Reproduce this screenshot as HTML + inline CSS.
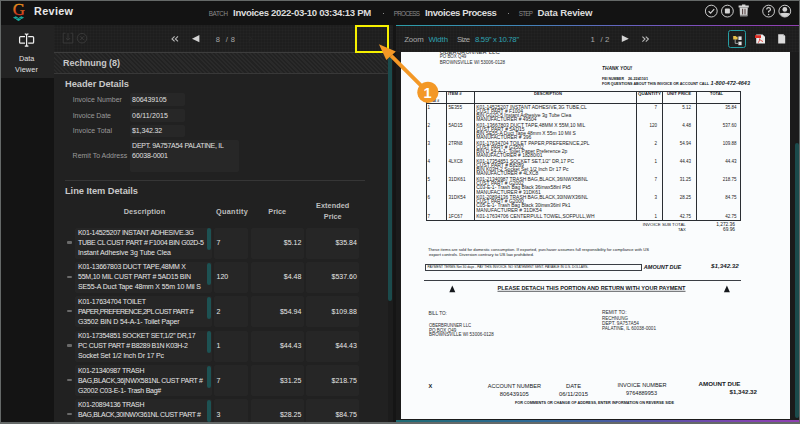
<!DOCTYPE html>
<html><head><meta charset="utf-8">
<style>
*{margin:0;padding:0;box-sizing:border-box}
html,body{width:800px;height:424px;overflow:hidden;background:#656968;font-family:"Liberation Sans",sans-serif}
.a{position:absolute}
.t{position:absolute;white-space:pre;line-height:1;font-family:"Liberation Sans",sans-serif}
.grid{background-color:#1e1e1e;background-image:linear-gradient(90deg,rgba(255,255,255,0.012) 1px,transparent 1px),linear-gradient(0deg,rgba(255,255,255,0.012) 1px,transparent 1px);background-size:3px 3px}
.box{position:absolute;background:#272727;border-radius:2px}
.cell{position:absolute;background:#262626;border-radius:2px}
.pill{position:absolute;width:4px;background:#1d5253;border-radius:2px}
.hdl{position:absolute;width:5px;height:2.4px;background:#6a6a6a;border-radius:1px}
.dl{position:absolute;background:#23272b}
</style></head><body>
<!-- main frame -->
<div class="a" style="left:1px;top:1px;width:798px;height:421px;background:#1c1c1c"></div>
<!-- header -->
<div class="a" style="left:1px;top:1px;width:798px;height:24px;background:#131313"></div>
<!-- sidebar -->
<div class="a" style="left:1px;top:25px;width:53px;height:53px;background:#232323"></div>
<div class="a" style="left:1px;top:78px;width:53px;height:344px;background:#141414"></div>
<!-- left panel -->
<div class="a grid" style="left:54px;top:25px;width:339px;height:28px"></div>
<div class="a" style="left:54px;top:52px;width:339px;height:1px;background:#3d3d3d"></div>
<div class="a" style="left:54px;top:53px;width:334px;height:20px;background:repeating-linear-gradient(45deg,#222222 0px,#222222 1.5px,#2a2a2a 1.5px,#2a2a2a 3px)"></div>
<div class="a" style="left:54px;top:73px;width:334px;height:1px;background:#383838"></div>
<div class="a" style="left:54px;top:74px;width:334px;height:348px;background:#212121"></div>
<div class="a" style="left:388px;top:53px;width:5px;height:369px;background:#1c1c1c"></div>
<div class="a" style="left:388px;top:57px;height:244px;width:4.3px;background:#1b4b4c;border-radius:2px"></div>
<div class="a" style="left:393px;top:25px;width:2.5px;height:397px;background:#151515"></div>
<!-- header detail boxes -->
<div class="box" style="left:129.8px;top:93.3px;width:55px;height:13.2px"></div>
<div class="box" style="left:129.8px;top:109px;width:55px;height:12.5px"></div>
<div class="box" style="left:129.8px;top:124.5px;width:55px;height:12.4px"></div>
<div class="box" style="left:129.6px;top:140.3px;width:109.7px;height:31.3px"></div>
<div class="a" style="left:65px;top:179.5px;width:300px;height:1px;background:#363636"></div>
<div class="cell" style="left:75px;top:227.60px;width:137px;height:31.2px"></div>
<div class="pill" style="left:207px;top:228.20px;height:22px"></div>
<div class="hdl" style="left:66.5px;top:241.20px"></div>
<div class="cell" style="left:213.7px;top:227.60px;width:34.5px;height:31.2px"></div>
<div class="cell" style="left:251px;top:227.60px;width:52.8px;height:31.2px"></div>
<div class="cell" style="left:306px;top:227.60px;width:53px;height:31.2px"></div>
<div class="cell" style="left:75px;top:261.95px;width:137px;height:31.2px"></div>
<div class="pill" style="left:207px;top:262.55px;height:22px"></div>
<div class="hdl" style="left:66.5px;top:275.55px"></div>
<div class="cell" style="left:213.7px;top:261.95px;width:34.5px;height:31.2px"></div>
<div class="cell" style="left:251px;top:261.95px;width:52.8px;height:31.2px"></div>
<div class="cell" style="left:306px;top:261.95px;width:53px;height:31.2px"></div>
<div class="cell" style="left:75px;top:296.30px;width:137px;height:31.2px"></div>
<div class="pill" style="left:207px;top:296.90px;height:22px"></div>
<div class="hdl" style="left:66.5px;top:309.90px"></div>
<div class="cell" style="left:213.7px;top:296.30px;width:34.5px;height:31.2px"></div>
<div class="cell" style="left:251px;top:296.30px;width:52.8px;height:31.2px"></div>
<div class="cell" style="left:306px;top:296.30px;width:53px;height:31.2px"></div>
<div class="cell" style="left:75px;top:330.65px;width:137px;height:31.2px"></div>
<div class="pill" style="left:207px;top:331.25px;height:22px"></div>
<div class="hdl" style="left:66.5px;top:344.25px"></div>
<div class="cell" style="left:213.7px;top:330.65px;width:34.5px;height:31.2px"></div>
<div class="cell" style="left:251px;top:330.65px;width:52.8px;height:31.2px"></div>
<div class="cell" style="left:306px;top:330.65px;width:53px;height:31.2px"></div>
<div class="cell" style="left:75px;top:365.00px;width:137px;height:31.2px"></div>
<div class="pill" style="left:207px;top:365.60px;height:22px"></div>
<div class="hdl" style="left:66.5px;top:378.60px"></div>
<div class="cell" style="left:213.7px;top:365.00px;width:34.5px;height:31.2px"></div>
<div class="cell" style="left:251px;top:365.00px;width:52.8px;height:31.2px"></div>
<div class="cell" style="left:306px;top:365.00px;width:53px;height:31.2px"></div>
<div class="cell" style="left:75px;top:399.35px;width:137px;height:31.2px"></div>
<div class="pill" style="left:207px;top:399.95px;height:22px"></div>
<div class="hdl" style="left:66.5px;top:412.95px"></div>
<div class="cell" style="left:213.7px;top:399.35px;width:34.5px;height:31.2px"></div>
<div class="cell" style="left:251px;top:399.35px;width:52.8px;height:31.2px"></div>
<div class="cell" style="left:306px;top:399.35px;width:53px;height:31.2px"></div>
<!-- right panel -->
<div class="a grid" style="left:395.5px;top:25px;width:403.5px;height:27px;background-color:#1d1d1d"></div>
<div class="a" style="left:395.5px;top:24.6px;width:403.5px;height:1.6px;background:linear-gradient(90deg,#2c9ea8 0%,#3f86b8 30%,#6a5fc0 60%,#8a44b8 85%,#9040b0 100%)"></div>
<div class="a" style="left:395.5px;top:52px;width:403.5px;height:370px;background:#1b1b1b"></div>
<div class="a" style="left:400.8px;top:52px;width:389px;height:366.5px;background:#fafcfd"></div>
<div class="a" style="left:795px;top:142.6px;width:4px;height:275.4px;background:#1b4b4c;border-radius:2px"></div>
<div class="a" style="left:395.5px;top:420.4px;width:403.5px;height:1.6px;background:linear-gradient(90deg,#1f6a72 0%,#2f6a98 35%,#5a52a8 65%,#8244b0 88%,#8e40b0 100%)"></div>
<div class="dl" style="left:425.8px;top:90.9px;width:314.7px;height:1.0px;background:#2a2e33"></div>
<div class="dl" style="left:425.8px;top:103.0px;width:314.7px;height:0.9px;background:#2a2e33"></div>
<div class="dl" style="left:425.8px;top:219.6px;width:314.7px;height:1.0px;background:#2a2e33"></div>
<div class="dl" style="left:425.8px;top:90.9px;width:1.0px;height:129.7px;background:#2a2e33"></div>
<div class="dl" style="left:445.9px;top:90.9px;width:1.0px;height:129.7px;background:#2a2e33"></div>
<div class="dl" style="left:473.9px;top:90.9px;width:1.0px;height:129.7px;background:#2a2e33"></div>
<div class="dl" style="left:636.4px;top:90.9px;width:1.0px;height:129.7px;background:#2a2e33"></div>
<div class="dl" style="left:662.4px;top:90.9px;width:1.0px;height:129.7px;background:#2a2e33"></div>
<div class="dl" style="left:695.9px;top:90.9px;width:1.0px;height:129.7px;background:#2a2e33"></div>
<div class="dl" style="left:739.7px;top:90.9px;width:1.0px;height:129.7px;background:#2a2e33"></div>
<div class="a" style="left:425px;top:264.3px;width:216.5px;height:7px;border:0.8px solid #3a3e44"></div>
<div class="dl" style="left:424px;top:279.8px;width:316.5px;height:1px;background:#3a3e44"></div>

<svg class="a" style="left:440px;top:280px" width="300" height="16" viewBox="440 280 300 16">
 <path d="M452.3 285.4 L455.3 292.2 L449.3 292.2Z" fill="#15181c"/>
 <path d="M726.9 285.4 L729.9 292.2 L723.9 292.2Z" fill="#15181c"/>
</svg>
<div class="a" style="left:383.2px;top:12.8px;width:1.3px;height:1.3px;background:#8a8a8a"></div>
<div class="a" style="left:508.2px;top:12.8px;width:1.3px;height:1.3px;background:#8a8a8a"></div>
<!--EXTRA-->
<!-- G logo -->
<svg class="a" style="left:8px;top:2px" width="22" height="22" viewBox="8 2 22 22">
 <defs><linearGradient id="gg" x1="0" y1="0" x2="0" y2="1"><stop offset="0.1" stop-color="#eca21e"/><stop offset="0.9" stop-color="#d2231f"/></linearGradient></defs>
 <text x="18.7" y="15.3" text-anchor="middle" font-family="Liberation Serif" font-size="16.8" fill="url(#gg)" stroke="url(#gg)" stroke-width="0.35">G</text>
 <path d="M12.9 17.7 L15.7 16.3 L18.4 17.7 L15.7 19.1Z M18.6 17.7 L21.4 16.3 L24.1 17.7 L21.4 19.1Z M15.8 19.4 L18.5 18.0 L21.2 19.4 L18.5 20.9Z" fill="#19a99c"/>
</svg>
<!-- header right icons -->
<svg class="a" style="left:700px;top:0px" width="99" height="24" viewBox="700 0 99 24">
 <g fill="none" stroke="#d4d4d4" stroke-width="0.95">
  <circle cx="711.3" cy="11.1" r="5.9"/>
  <path d="M708.6 11.3 L710.6 13.2 L714.2 9.2" stroke-width="1.2"/>
  <circle cx="727.4" cy="11.1" r="5.9"/>
  <circle cx="768.6" cy="11.1" r="5.9"/>
  <circle cx="784.8" cy="11.1" r="5.9"/>
  <path d="M766.7 9.6 Q766.7 7.6 768.6 7.6 Q770.5 7.6 770.5 9.4 Q770.5 10.6 768.6 11.4 V12.6" stroke-width="1.15"/>
 </g>
 <rect x="724.9" y="8.6" width="5" height="5" rx="0.8" fill="#d4d4d4"/>
 <circle cx="768.6" cy="14.6" r="0.75" fill="#d4d4d4"/>
 <!-- trash -->
 <path d="M738.6 5.6 H748.8 V7.4 H738.6Z M742 4.6 H745.4 V5.6 H742Z" fill="#d4d4d4"/>
 <path d="M739.6 7.6 H747.8 L747.4 16.2 H740Z" fill="#d4d4d4"/>
 <path d="M742.6 8.8 V14.4 M745 8.8 V14.4" stroke="#4a3434" stroke-width="0.95"/>
 <path d="M740 14.8 H747.4 V16.2 H740Z" fill="#8a8a8a"/>
 <circle cx="784.8" cy="9.4" r="2.4" fill="#d4d4d4"/>
 <path d="M779.9 13.3 Q784.8 12.2 789.7 13.3 Q788.4 16.6 784.8 16.9 Q781.2 16.6 779.9 13.3Z" fill="#d4d4d4"/>
</svg>
<!-- data viewer icon -->
<svg class="a" style="left:17px;top:32px" width="20" height="16" viewBox="0 0 20 16">
 <g fill="none" stroke="#eeeeee" stroke-width="1.25">
  <path d="M8 4.6 H3.6 Q2.6 4.6 2.6 5.6 V10.2 Q2.6 11.2 3.6 11.2 H8"/>
  <path d="M11.2 4.6 H15.6 Q16.6 4.6 16.6 5.6 V10.2 Q16.6 11.2 15.6 11.2 H11.2"/>
  <path d="M9.6 2.4 V13.6"/>
  <path d="M7.8 1.8 Q9.6 1.8 9.6 3 Q9.6 1.8 11.4 1.8"/>
  <path d="M7.8 14.2 Q9.6 14.2 9.6 13 Q9.6 14.2 11.4 14.2"/>
 </g>
</svg>
<!-- left toolbar dim icons -->
<svg class="a" style="left:62px;top:32px" width="28" height="13" viewBox="0 0 28 13">
 <g fill="none" stroke="#3b3b3b" stroke-width="0.9">
  <path d="M3.5 1.2 H1.2 V11 H10.8 V1.2 H8.5"/>
  <path d="M6 1 V8 M3.8 6 L6 8.2 L8.2 6"/>
  <circle cx="20" cy="6.2" r="4.8"/>
  <path d="M18 4.2 L22 8.2 M22 4.2 L18 8.2"/>
 </g>
</svg>
<!-- left nav -->
<svg class="a" style="left:168px;top:33px" width="90" height="12" viewBox="0 0 90 12">
 <path d="M6.6 3.4 L4 5.9 L6.6 8.4 M10 3.4 L7.4 5.9 L10 8.4" fill="none" stroke="#b8b8b8" stroke-width="1.1"/>
 <path d="M31.4 2 V9.3 L24 5.65Z" fill="#d4d4d4"/>
 <path d="M80.4 3.4 L84.2 5.8 L80.4 8.2" fill="none" stroke="#262626" stroke-width="1"/>
</svg>
<!-- right nav -->
<svg class="a" style="left:618px;top:33px" width="40" height="12" viewBox="0 0 40 12">
 <path d="M3.8 2.2 V9.1 L10.8 5.65Z" fill="#d4d4d4"/>
 <path d="M24.4 3.6 L27 6.1 L24.4 8.6 M27.8 3.6 L30.4 6.1 L27.8 8.6" fill="none" stroke="#b8b8b8" stroke-width="1.1"/>
 <path d="M-4 3.2 L-8 5.7" stroke="#2e2e2e"/>
</svg>
<!-- right toolbar buttons -->
<div class="a" style="left:728px;top:30.3px;width:18px;height:17.5px;border:1.2px solid #269ea4;border-radius:2.5px"></div>
<svg class="a" style="left:728px;top:30px" width="60" height="18" viewBox="0 0 60 18">
 <path d="M5.2 6 H7.6 L8.4 6.8 H9.6 V9.4 H5.2Z" fill="#e8c04a"/>
 <path d="M7.2 9.4 V13.4 H10" fill="none" stroke="#cfcfcf" stroke-width="0.7"/>
 <rect x="10.4" y="6.4" width="3.2" height="3.6" fill="#e4e4e4"/>
 <rect x="10.4" y="11.6" width="3.2" height="3.6" fill="#e4e4e4"/>
 <!-- pdf -->
 <path d="M28.2 4.4 H34.6 L37 6.8 V13.4 H28.2Z" fill="#eeeeee"/>
 <path d="M27 5.2 H33 V8 H27Z" fill="#dd2b22"/>
 <path d="M31.2 8.8 Q32.6 10.6 35 11.6 M31.8 8.6 Q31.6 11 30.2 12.8" fill="none" stroke="#dd2b22" stroke-width="0.8"/>
 <!-- doc -->
 <path d="M50.2 4.2 H55.4 L57.2 6 V13.4 H50.2Z" fill="#dcdcdc"/>
 <path d="M55.4 4.2 V6 H57.2" fill="#a8a8a8"/>
</svg>

<svg class="a" style="left:0;top:0" width="800" height="424" font-family="Liberation Sans" xml:space="preserve"><defs><clipPath id="pg"><rect x="400.8" y="52" width="389" height="366.5"/></clipPath></defs>
<line x1="497.5" y1="291.3" x2="685.5" y2="291.3" stroke="#15181c" stroke-width="0.7"/>
<text x="34.00" y="14.80" font-size="10.8" fill="#e8e8e8" font-weight="bold" textLength="39.00" lengthAdjust="spacing">Review</text>
<text x="208.80" y="15.60" font-size="6.3" fill="#8a8a8a" textLength="19.20" lengthAdjust="spacing">BATCH</text>
<text x="233.10" y="16.00" font-size="9.6" fill="#dcdcdc" font-weight="bold" textLength="138.10" lengthAdjust="spacing">Invoices 2022-03-10 03:34:13 PM</text>
<text x="393.80" y="15.60" font-size="6.3" fill="#8a8a8a" textLength="26.20" lengthAdjust="spacing">PROCESS</text>
<text x="425.00" y="16.00" font-size="9.6" fill="#dcdcdc" font-weight="bold" textLength="71.90" lengthAdjust="spacing">Invoices Process</text>
<text x="518.80" y="15.60" font-size="6.3" fill="#8a8a8a" textLength="14.20" lengthAdjust="spacing">STEP</text>
<text x="537.50" y="16.00" font-size="9.6" fill="#dcdcdc" font-weight="bold" textLength="55.00" lengthAdjust="spacing">Data Review</text>
<text x="18.90" y="61.00" font-size="7.3" fill="#e0e0e0" textLength="15.50" lengthAdjust="spacing">Data</text>
<text x="15.00" y="72.20" font-size="7.3" fill="#e0e0e0" textLength="22.90" lengthAdjust="spacing">Viewer</text>
<text x="215.80" y="41.80" font-size="7.5" fill="#a8a8a8">8</text>
<text x="225.80" y="41.80" font-size="7.5" fill="#a8a8a8" textLength="9.20" lengthAdjust="spacing">/8</text>
<text x="63.00" y="66.00" font-size="9" fill="#c8c8c8" font-weight="bold" textLength="57.00" lengthAdjust="spacing">Rechnung (8)</text>
<text x="65.00" y="87.00" font-size="9.3" fill="#c8c8c8" font-weight="bold" textLength="64.00" lengthAdjust="spacing">Header Details</text>
<text x="72.70" y="102.10" font-size="7" fill="#9a9a9a" textLength="49.20" lengthAdjust="spacing">Invoice Number</text>
<text x="72.70" y="117.90" font-size="7" fill="#9a9a9a" textLength="38.30" lengthAdjust="spacing">Invoice Date</text>
<text x="72.70" y="133.20" font-size="7" fill="#9a9a9a" textLength="39.40" lengthAdjust="spacing">Invoice Total</text>
<text x="72.60" y="157.80" font-size="7" fill="#9a9a9a" textLength="54.60" lengthAdjust="spacing">Remit To Address</text>
<text x="132.10" y="102.10" font-size="7" fill="#e0e0e0" textLength="34.60" lengthAdjust="spacing">806439105</text>
<text x="132.10" y="117.70" font-size="7" fill="#e0e0e0" textLength="35.80" lengthAdjust="spacing">06/11/2015</text>
<text x="132.10" y="132.70" font-size="7" fill="#e0e0e0" textLength="30.00" lengthAdjust="spacing">$1,342.32</text>
<text x="132.10" y="148.40" font-size="7" fill="#e0e0e0" textLength="91.80" lengthAdjust="spacing">DEPT. 9A757A54 PALATINE, IL</text>
<text x="132.10" y="157.80" font-size="7" fill="#e0e0e0" textLength="35.90" lengthAdjust="spacing">60038-0001</text>
<text x="65.00" y="194.20" font-size="9.3" fill="#c8c8c8" font-weight="bold" textLength="73.00" lengthAdjust="spacing">Line Item Details</text>
<text x="123.70" y="214.00" font-size="7.3" fill="#bdbdbd" font-weight="bold" textLength="41.40" lengthAdjust="spacing">Description</text>
<text x="215.90" y="214.00" font-size="7.3" fill="#bdbdbd" font-weight="bold" textLength="32.00" lengthAdjust="spacing">Quantity</text>
<text x="268.30" y="213.70" font-size="7.3" fill="#bdbdbd" font-weight="bold" textLength="17.70" lengthAdjust="spacing">Price</text>
<text x="316.00" y="208.00" font-size="7.3" fill="#bdbdbd" font-weight="bold" textLength="33.30" lengthAdjust="spacing">Extended</text>
<text x="323.80" y="218.80" font-size="7.3" fill="#bdbdbd" font-weight="bold" textLength="17.70" lengthAdjust="spacing">Price</text>
<text x="78.00" y="235.10" font-size="7" fill="#e6e6e6" textLength="116.00" lengthAdjust="spacing">K01-14525207 INSTANT ADHESIVE.3G</text>
<text x="78.00" y="245.10" font-size="7" fill="#e6e6e6" textLength="126.00" lengthAdjust="spacing">TUBE CL CUST PART # F1004 BIN G02D-5</text>
<text x="78.00" y="255.10" font-size="7" fill="#e6e6e6" textLength="93.00" lengthAdjust="spacing">Instant Adhesive 3g Tube Clea</text>
<text x="216.50" y="245.10" font-size="7" fill="#e6e6e6">7</text>
<text x="301.30" y="245.10" font-size="7" fill="#e6e6e6" text-anchor="end">$5.12</text>
<text x="356.80" y="245.10" font-size="7" fill="#e6e6e6" text-anchor="end">$35.84</text>
<text x="78.00" y="269.45" font-size="7" fill="#e6e6e6" textLength="108.00" lengthAdjust="spacing">K01-13667803 DUCT TAPE,48MM X</text>
<text x="78.00" y="279.45" font-size="7" fill="#e6e6e6" textLength="113.00" lengthAdjust="spacing">55M,10 MIL CUST PART # 5AD15 BIN</text>
<text x="78.00" y="289.45" font-size="7" fill="#e6e6e6" textLength="123.00" lengthAdjust="spacing">SE55-A Duct Tape 48mm X 55m 10 Mil S</text>
<text x="216.50" y="279.45" font-size="7" fill="#e6e6e6">120</text>
<text x="301.30" y="279.45" font-size="7" fill="#e6e6e6" text-anchor="end">$4.48</text>
<text x="356.80" y="279.45" font-size="7" fill="#e6e6e6" text-anchor="end">$537.60</text>
<text x="78.00" y="303.80" font-size="7" fill="#e6e6e6" textLength="68.00" lengthAdjust="spacing">K01-17634704 TOILET</text>
<text x="78.00" y="313.80" font-size="7" fill="#e6e6e6" textLength="115.60" lengthAdjust="spacing">PAPER,PREFERENCE,2PL CUST PART #</text>
<text x="78.00" y="323.80" font-size="7" fill="#e6e6e6" textLength="101.60" lengthAdjust="spacing">G3502 BIN D 54-A-1- Toilet Paper</text>
<text x="216.50" y="313.80" font-size="7" fill="#e6e6e6">2</text>
<text x="301.30" y="313.80" font-size="7" fill="#e6e6e6" text-anchor="end">$54.94</text>
<text x="356.80" y="313.80" font-size="7" fill="#e6e6e6" text-anchor="end">$109.88</text>
<text x="78.00" y="338.15" font-size="7" fill="#e6e6e6" textLength="117.60" lengthAdjust="spacing">K01-17354851 SOCKET SET,1/2” DR,17</text>
<text x="78.00" y="348.15" font-size="7" fill="#e6e6e6" textLength="110.00" lengthAdjust="spacing">PC CUST PART # B8289 B1N K03H-2</text>
<text x="78.00" y="358.15" font-size="7" fill="#e6e6e6" textLength="86.00" lengthAdjust="spacing">Socket Set 1/2 Inch Dr 17 Pc</text>
<text x="216.50" y="348.15" font-size="7" fill="#e6e6e6">1</text>
<text x="301.30" y="348.15" font-size="7" fill="#e6e6e6" text-anchor="end">$44.43</text>
<text x="356.80" y="348.15" font-size="7" fill="#e6e6e6" text-anchor="end">$44.43</text>
<text x="78.00" y="372.50" font-size="7" fill="#e6e6e6" textLength="66.50" lengthAdjust="spacing">K01-21340987 TRASH</text>
<text x="78.00" y="382.50" font-size="7" fill="#e6e6e6" textLength="125.00" lengthAdjust="spacing">BAG,BLACK,36|NWX581NL CUST PART #</text>
<text x="78.00" y="392.50" font-size="7" fill="#e6e6e6" textLength="83.25" lengthAdjust="spacing">G2002 C03-E-1- Trash Bag#</text>
<text x="216.50" y="382.50" font-size="7" fill="#e6e6e6">7</text>
<text x="301.30" y="382.50" font-size="7" fill="#e6e6e6" text-anchor="end">$31.25</text>
<text x="356.80" y="382.50" font-size="7" fill="#e6e6e6" text-anchor="end">$218.75</text>
<text x="78.00" y="406.85" font-size="7" fill="#e6e6e6" textLength="66.50" lengthAdjust="spacing">K01-20894136 TRASH</text>
<text x="78.00" y="416.85" font-size="7" fill="#e6e6e6" textLength="123.00" lengthAdjust="spacing">BAG,BLACK,30INWX361NL CUST PART #</text>
<text x="78.00" y="426.85" font-size="7" fill="#e6e6e6" textLength="83.25" lengthAdjust="spacing">G2002 C03-E-1- Trash Bag#</text>
<text x="216.50" y="416.85" font-size="7" fill="#e6e6e6">3</text>
<text x="301.30" y="416.85" font-size="7" fill="#e6e6e6" text-anchor="end">$28.25</text>
<text x="356.80" y="416.85" font-size="7" fill="#e6e6e6" text-anchor="end">$84.75</text>
<text x="404.20" y="41.50" font-size="7.8" fill="#a8a8a8" textLength="19.50" lengthAdjust="spacing">Zoom</text>
<text x="428.50" y="41.50" font-size="7.8" fill="#2fa3b3" textLength="19.50" lengthAdjust="spacing">Width</text>
<text x="457.00" y="41.50" font-size="7.8" fill="#a8a8a8" textLength="13.00" lengthAdjust="spacing">Size</text>
<text x="475.00" y="41.50" font-size="7.8" fill="#2fa3b3" textLength="44.00" lengthAdjust="spacing">8.59” x 10.78”</text>
<text x="590.60" y="41.50" font-size="7.8" fill="#a8a8a8">1</text>
<text x="600.60" y="41.50" font-size="7.8" fill="#a8a8a8" textLength="8.80" lengthAdjust="spacing">/2</text>
<text x="439.80" y="53.60" font-size="4.6" fill="#2a2d30" textLength="60.00" lengthAdjust="spacingAndGlyphs" style="clip-path:url(#pg);">OBERBRUNNER LLC</text>
<text x="439.80" y="57.80" font-size="4.6" fill="#2a2d30" textLength="26.50" lengthAdjust="spacingAndGlyphs" style="clip-path:url(#pg);">PO BOX Q49</text>
<text x="439.80" y="63.60" font-size="4.6" fill="#2a2d30" textLength="65.20" lengthAdjust="spacingAndGlyphs" style="clip-path:url(#pg);">BROWNSVILLE WI 53006-0128</text>
<text x="602.00" y="70.00" font-size="4.6" fill="#15181c" font-weight="bold" font-style="italic" textLength="30.00" lengthAdjust="spacingAndGlyphs" style="clip-path:url(#pg);">THANK YOU!</text>
<text x="602.00" y="79.60" font-size="3.3" fill="#15181c" font-weight="bold" textLength="22.00" lengthAdjust="spacingAndGlyphs" style="clip-path:url(#pg);">FEI NUMBER</text>
<text x="628.00" y="79.60" font-size="3.3" fill="#15181c" font-weight="bold" textLength="20.00" lengthAdjust="spacingAndGlyphs" style="clip-path:url(#pg);">26-2241101</text>
<text x="602.00" y="85.00" font-size="3.6" fill="#15181c" font-weight="bold" textLength="107.00" lengthAdjust="spacingAndGlyphs" style="clip-path:url(#pg);">FOR QUESTIONS ABOUT THIS INVOICE OR ACCOUNT CALL</text>
<text x="710.60" y="85.30" font-size="6.2" fill="#15181c" font-weight="bold" font-style="italic" textLength="39.40" lengthAdjust="spacingAndGlyphs" style="clip-path:url(#pg);">1-800-472-4643</text>
<text x="448.00" y="95.30" font-size="3.4" fill="#15181c" font-weight="bold" textLength="13.60" lengthAdjust="spacingAndGlyphs" style="clip-path:url(#pg);">ITEM #</text>
<text x="427.50" y="97.00" font-size="3.4" fill="#15181c" font-weight="bold" style="clip-path:url(#pg);">LINE</text>
<text x="428.50" y="101.70" font-size="3.4" fill="#15181c" font-weight="bold" style="clip-path:url(#pg);">LINE #</text>
<text x="534.00" y="95.40" font-size="3.4" fill="#15181c" font-weight="bold" textLength="28.00" lengthAdjust="spacingAndGlyphs" style="clip-path:url(#pg);">DESCRIPTION</text>
<text x="638.00" y="95.40" font-size="3.4" fill="#15181c" font-weight="bold" textLength="23.00" lengthAdjust="spacingAndGlyphs" style="clip-path:url(#pg);">QUANTITY</text>
<text x="667.00" y="95.40" font-size="3.4" fill="#15181c" font-weight="bold" textLength="24.00" lengthAdjust="spacingAndGlyphs" style="clip-path:url(#pg);">UNIT PRICE</text>
<text x="710.00" y="95.40" font-size="3.4" fill="#15181c" font-weight="bold" textLength="13.00" lengthAdjust="spacingAndGlyphs" style="clip-path:url(#pg);">TOTAL</text>
<text x="427.40" y="108.60" font-size="4.5" fill="#1a1a1a" style="clip-path:url(#pg);">1</text>
<text x="448.50" y="108.60" font-size="4.5" fill="#1a1a1a" textLength="13.50" lengthAdjust="spacingAndGlyphs" style="clip-path:url(#pg);">5E355</text>
<text x="476.20" y="108.60" font-size="4.5" fill="#1a1a1a" textLength="110.70" lengthAdjust="spacingAndGlyphs" style="clip-path:url(#pg);">K01-14525207 INSTANT ADHESIVE,3G TUBE,CL</text>
<text x="476.20" y="112.75" font-size="4.5" fill="#1a1a1a" textLength="46.80" lengthAdjust="spacingAndGlyphs" style="clip-path:url(#pg);">CUST PART # F1004</text>
<text x="476.20" y="116.90" font-size="4.5" fill="#1a1a1a" textLength="95.00" lengthAdjust="spacingAndGlyphs" style="clip-path:url(#pg);">BIN G02D-5 Instant Adhesive 3g Tube Clea</text>
<text x="476.20" y="121.05" font-size="4.5" fill="#1a1a1a" textLength="60.30" lengthAdjust="spacingAndGlyphs" style="clip-path:url(#pg);">MANUFACTURER # 49504</text>
<text x="657.00" y="108.60" font-size="4.5" fill="#1a1a1a" text-anchor="end" style="clip-path:url(#pg);">7</text>
<text x="691.00" y="108.60" font-size="4.5" fill="#1a1a1a" text-anchor="end" style="clip-path:url(#pg);">5.12</text>
<text x="736.50" y="108.60" font-size="4.5" fill="#1a1a1a" text-anchor="end" style="clip-path:url(#pg);">35.84</text>
<text x="427.40" y="126.70" font-size="4.5" fill="#1a1a1a" style="clip-path:url(#pg);">2</text>
<text x="448.50" y="126.70" font-size="4.5" fill="#1a1a1a" textLength="14.00" lengthAdjust="spacingAndGlyphs" style="clip-path:url(#pg);">5AD15</text>
<text x="476.20" y="126.70" font-size="4.5" fill="#1a1a1a" textLength="109.00" lengthAdjust="spacingAndGlyphs" style="clip-path:url(#pg);">K01-13667803 DUCT TAPE,48MM X 55M,10 MIL</text>
<text x="476.20" y="130.85" font-size="4.5" fill="#1a1a1a" textLength="48.40" lengthAdjust="spacingAndGlyphs" style="clip-path:url(#pg);">CUST PART # 5AD15</text>
<text x="476.20" y="135.00" font-size="4.5" fill="#1a1a1a" textLength="99.60" lengthAdjust="spacingAndGlyphs" style="clip-path:url(#pg);">BIN SE55-A Duct Tape 48mm X 55m 10 Mil S</text>
<text x="476.20" y="139.15" font-size="4.5" fill="#1a1a1a" textLength="55.00" lengthAdjust="spacingAndGlyphs" style="clip-path:url(#pg);">MANUFACTURER # 396</text>
<text x="657.00" y="126.70" font-size="4.5" fill="#1a1a1a" text-anchor="end" style="clip-path:url(#pg);">120</text>
<text x="691.00" y="126.70" font-size="4.5" fill="#1a1a1a" text-anchor="end" style="clip-path:url(#pg);">4.48</text>
<text x="736.50" y="126.70" font-size="4.5" fill="#1a1a1a" text-anchor="end" style="clip-path:url(#pg);">537.60</text>
<text x="427.40" y="144.70" font-size="4.5" fill="#1a1a1a" style="clip-path:url(#pg);">3</text>
<text x="448.50" y="144.70" font-size="4.5" fill="#1a1a1a" textLength="14.00" lengthAdjust="spacingAndGlyphs" style="clip-path:url(#pg);">2TRN8</text>
<text x="476.20" y="144.70" font-size="4.5" fill="#1a1a1a" textLength="113.40" lengthAdjust="spacingAndGlyphs" style="clip-path:url(#pg);">K01-17634704 TOILET PAPER,PREFERENCE,2PL</text>
<text x="476.20" y="148.85" font-size="4.5" fill="#1a1a1a" textLength="47.60" lengthAdjust="spacingAndGlyphs" style="clip-path:url(#pg);">CUST PART # G3502</text>
<text x="476.20" y="153.00" font-size="4.5" fill="#1a1a1a" textLength="91.20" lengthAdjust="spacingAndGlyphs" style="clip-path:url(#pg);">BIN D 54-A-1- Toilet Paper Preference 2p</text>
<text x="476.20" y="157.15" font-size="4.5" fill="#1a1a1a" textLength="66.30" lengthAdjust="spacingAndGlyphs" style="clip-path:url(#pg);">MANUFACTURER # 18280/01</text>
<text x="657.00" y="144.70" font-size="4.5" fill="#1a1a1a" text-anchor="end" style="clip-path:url(#pg);">2</text>
<text x="691.00" y="144.70" font-size="4.5" fill="#1a1a1a" text-anchor="end" style="clip-path:url(#pg);">54.94</text>
<text x="736.50" y="144.70" font-size="4.5" fill="#1a1a1a" text-anchor="end" style="clip-path:url(#pg);">109.88</text>
<text x="427.40" y="162.90" font-size="4.5" fill="#1a1a1a" style="clip-path:url(#pg);">4</text>
<text x="448.50" y="162.90" font-size="4.5" fill="#1a1a1a" textLength="14.00" lengthAdjust="spacingAndGlyphs" style="clip-path:url(#pg);">4LXC8</text>
<text x="476.20" y="162.90" font-size="4.5" fill="#1a1a1a" textLength="98.00" lengthAdjust="spacingAndGlyphs" style="clip-path:url(#pg);">K01-17354851 SOCKET SET,1/2" DR,17 PC</text>
<text x="476.20" y="167.05" font-size="4.5" fill="#1a1a1a" textLength="47.60" lengthAdjust="spacingAndGlyphs" style="clip-path:url(#pg);">CUST PART # B8289</text>
<text x="476.20" y="171.20" font-size="4.5" fill="#1a1a1a" textLength="92.30" lengthAdjust="spacingAndGlyphs" style="clip-path:url(#pg);">BIN K03H-2 Socket Set 1/2 Inch  Dr 17 Pc</text>
<text x="476.20" y="175.35" font-size="4.5" fill="#1a1a1a" textLength="62.20" lengthAdjust="spacingAndGlyphs" style="clip-path:url(#pg);">MANUFACTURER # 4LXC8</text>
<text x="657.00" y="162.90" font-size="4.5" fill="#1a1a1a" text-anchor="end" style="clip-path:url(#pg);">1</text>
<text x="691.00" y="162.90" font-size="4.5" fill="#1a1a1a" text-anchor="end" style="clip-path:url(#pg);">44.43</text>
<text x="736.50" y="162.90" font-size="4.5" fill="#1a1a1a" text-anchor="end" style="clip-path:url(#pg);">44.43</text>
<text x="427.40" y="181.10" font-size="4.5" fill="#1a1a1a" style="clip-path:url(#pg);">5</text>
<text x="448.50" y="181.10" font-size="4.5" fill="#1a1a1a" textLength="17.00" lengthAdjust="spacingAndGlyphs" style="clip-path:url(#pg);">31DK61</text>
<text x="476.20" y="181.10" font-size="4.5" fill="#1a1a1a" textLength="111.80" lengthAdjust="spacingAndGlyphs" style="clip-path:url(#pg);">K01-21340987 TRASH BAG,BLACK,36INWX58INL</text>
<text x="476.20" y="185.25" font-size="4.5" fill="#1a1a1a" textLength="47.60" lengthAdjust="spacingAndGlyphs" style="clip-path:url(#pg);">CUST PART # G2002</text>
<text x="476.20" y="189.40" font-size="4.5" fill="#1a1a1a" textLength="94.70" lengthAdjust="spacingAndGlyphs" style="clip-path:url(#pg);">C03-E-1- Trash Bag Black 36inwx58inl Pk5</text>
<text x="476.20" y="193.55" font-size="4.5" fill="#1a1a1a" textLength="64.70" lengthAdjust="spacingAndGlyphs" style="clip-path:url(#pg);">MANUFACTURER # 31DK61</text>
<text x="657.00" y="181.10" font-size="4.5" fill="#1a1a1a" text-anchor="end" style="clip-path:url(#pg);">7</text>
<text x="691.00" y="181.10" font-size="4.5" fill="#1a1a1a" text-anchor="end" style="clip-path:url(#pg);">31.25</text>
<text x="736.50" y="181.10" font-size="4.5" fill="#1a1a1a" text-anchor="end" style="clip-path:url(#pg);">218.75</text>
<text x="427.40" y="199.10" font-size="4.5" fill="#1a1a1a" style="clip-path:url(#pg);">6</text>
<text x="448.50" y="199.10" font-size="4.5" fill="#1a1a1a" textLength="17.00" lengthAdjust="spacingAndGlyphs" style="clip-path:url(#pg);">31DK54</text>
<text x="476.20" y="199.10" font-size="4.5" fill="#1a1a1a" textLength="111.80" lengthAdjust="spacingAndGlyphs" style="clip-path:url(#pg);">K01-20894136 TRASH BAG,BLACK,30INWX36INL</text>
<text x="476.20" y="203.25" font-size="4.5" fill="#1a1a1a" textLength="47.60" lengthAdjust="spacingAndGlyphs" style="clip-path:url(#pg);">CUST PART # G2000</text>
<text x="476.20" y="207.40" font-size="4.5" fill="#1a1a1a" textLength="94.40" lengthAdjust="spacingAndGlyphs" style="clip-path:url(#pg);">C05-E-1- Trash Bag Black 30inwx36inl Pk1</text>
<text x="476.20" y="211.55" font-size="4.5" fill="#1a1a1a" textLength="65.50" lengthAdjust="spacingAndGlyphs" style="clip-path:url(#pg);">MANUFACTURER # 31DK54</text>
<text x="657.00" y="199.10" font-size="4.5" fill="#1a1a1a" text-anchor="end" style="clip-path:url(#pg);">3</text>
<text x="691.00" y="199.10" font-size="4.5" fill="#1a1a1a" text-anchor="end" style="clip-path:url(#pg);">28.25</text>
<text x="736.50" y="199.10" font-size="4.5" fill="#1a1a1a" text-anchor="end" style="clip-path:url(#pg);">84.75</text>
<text x="427.40" y="217.60" font-size="4.5" fill="#1a1a1a" style="clip-path:url(#pg);">7</text>
<text x="448.50" y="217.60" font-size="4.5" fill="#1a1a1a" textLength="14.00" lengthAdjust="spacingAndGlyphs" style="clip-path:url(#pg);">1FC67</text>
<text x="476.20" y="217.60" font-size="4.5" fill="#1a1a1a" textLength="118.30" lengthAdjust="spacingAndGlyphs" style="clip-path:url(#pg);">K01-17634706 CENTERPULL TOWEL,SOFPULL,WH</text>
<text x="657.00" y="217.60" font-size="4.5" fill="#1a1a1a" text-anchor="end" style="clip-path:url(#pg);">1</text>
<text x="691.00" y="217.60" font-size="4.5" fill="#1a1a1a" text-anchor="end" style="clip-path:url(#pg);">42.75</text>
<text x="736.50" y="217.60" font-size="4.5" fill="#1a1a1a" text-anchor="end" style="clip-path:url(#pg);">42.75</text>
<text x="685.80" y="226.00" font-size="4.2" fill="#15181c" text-anchor="end" textLength="43.10" lengthAdjust="spacingAndGlyphs" style="clip-path:url(#pg);">INVOICE SUB TOTAL</text>
<text x="685.80" y="230.60" font-size="4.2" fill="#15181c" text-anchor="end" textLength="7.80" lengthAdjust="spacingAndGlyphs" style="clip-path:url(#pg);">TAX</text>
<text x="735.00" y="226.00" font-size="4.5" fill="#15181c" text-anchor="end" textLength="18.80" lengthAdjust="spacingAndGlyphs" style="clip-path:url(#pg);">1,272.36</text>
<text x="735.00" y="230.60" font-size="4.5" fill="#15181c" text-anchor="end" textLength="12.00" lengthAdjust="spacingAndGlyphs" style="clip-path:url(#pg);">69.96</text>
<text x="428.00" y="251.20" font-size="4" fill="#15181c" textLength="221.00" lengthAdjust="spacingAndGlyphs" style="clip-path:url(#pg);">These items are sold for domestic consumption. If exported, purchaser assumes full responsibility for compliance with US</text>
<text x="429.00" y="256.20" font-size="4" fill="#15181c" textLength="105.00" lengthAdjust="spacingAndGlyphs" style="clip-path:url(#pg);">export controls. Diversion contrary to US law prohibited.</text>
<text x="427.50" y="268.30" font-size="2.9" fill="#15181c" textLength="161.00" lengthAdjust="spacingAndGlyphs" style="clip-path:url(#pg);">PAYMENT TERMS Net 30 days  -  PAY THIS INVOICE. NO STATEMENT SENT. PAYABLE IN U.S. DOLLARS.</text>
<text x="643.80" y="268.80" font-size="6" fill="#15181c" font-weight="bold" font-style="italic" textLength="37.50" lengthAdjust="spacingAndGlyphs" style="clip-path:url(#pg);">AMOUNT DUE</text>
<text x="711.00" y="267.60" font-size="6" fill="#15181c" font-weight="bold" font-style="italic" textLength="27.80" lengthAdjust="spacingAndGlyphs" style="clip-path:url(#pg);">$1,342.32</text>
<text x="497.50" y="290.00" font-size="5.2" fill="#15181c" font-weight="bold" textLength="188.00" lengthAdjust="spacingAndGlyphs" style="clip-path:url(#pg);">PLEASE DETACH THIS PORTION AND RETURN WITH YOUR PAYMENT</text>
<text x="428.40" y="315.00" font-size="4.8" fill="#2a2d30" textLength="18.50" lengthAdjust="spacingAndGlyphs" style="clip-path:url(#pg);">BILL TO:</text>
<text x="429.00" y="326.90" font-size="4.8" fill="#2a2d30" textLength="42.20" lengthAdjust="spacingAndGlyphs" style="clip-path:url(#pg);">OBERBRUNNER LLC</text>
<text x="429.00" y="331.90" font-size="4.8" fill="#2a2d30" textLength="27.20" lengthAdjust="spacingAndGlyphs" style="clip-path:url(#pg);">PO BOX Q49</text>
<text x="429.00" y="336.30" font-size="4.8" fill="#2a2d30" textLength="64.70" lengthAdjust="spacingAndGlyphs" style="clip-path:url(#pg);">BROWNSVILLE WI  53006-0128</text>
<text x="602.00" y="314.00" font-size="4.8" fill="#2a2d30" textLength="24.50" lengthAdjust="spacingAndGlyphs" style="clip-path:url(#pg);">REMIT TO:</text>
<text x="602.00" y="319.50" font-size="4.8" fill="#2a2d30" textLength="26.00" lengthAdjust="spacingAndGlyphs" style="clip-path:url(#pg);">RECHNUNG</text>
<text x="602.00" y="324.50" font-size="4.8" fill="#2a2d30" textLength="37.00" lengthAdjust="spacingAndGlyphs" style="clip-path:url(#pg);">DEPT. 9A757A54</text>
<text x="602.00" y="330.00" font-size="4.8" fill="#2a2d30" textLength="54.00" lengthAdjust="spacingAndGlyphs" style="clip-path:url(#pg);">PALATINE, IL 60038-0001</text>
<text x="428.40" y="387.70" font-size="5.6" fill="#15181c" font-weight="bold" style="clip-path:url(#pg);">X</text>
<text x="487.70" y="387.70" font-size="5.6" fill="#15181c" textLength="53.30" lengthAdjust="spacingAndGlyphs" style="clip-path:url(#pg);">ACCOUNT NUMBER</text>
<text x="514.30" y="395.60" font-size="5" fill="#15181c" text-anchor="middle" textLength="29.00" lengthAdjust="spacingAndGlyphs" style="clip-path:url(#pg);">806439105</text>
<text x="566.00" y="387.70" font-size="5.6" fill="#15181c" textLength="15.00" lengthAdjust="spacingAndGlyphs" style="clip-path:url(#pg);">DATE</text>
<text x="573.50" y="395.60" font-size="5" fill="#15181c" text-anchor="middle" textLength="29.00" lengthAdjust="spacingAndGlyphs" style="clip-path:url(#pg);">06/11/2015</text>
<text x="617.50" y="386.80" font-size="5.6" fill="#15181c" textLength="49.00" lengthAdjust="spacingAndGlyphs" style="clip-path:url(#pg);">INVOICE NUMBER</text>
<text x="641.50" y="395.00" font-size="5" fill="#15181c" text-anchor="middle" textLength="31.00" lengthAdjust="spacingAndGlyphs" style="clip-path:url(#pg);">9764889953</text>
<text x="698.50" y="386.00" font-size="6" fill="#15181c" font-weight="bold" textLength="42.00" lengthAdjust="spacingAndGlyphs" style="clip-path:url(#pg);">AMOUNT DUE</text>
<text x="729.50" y="394.00" font-size="5.6" fill="#15181c" font-weight="bold" textLength="27.50" lengthAdjust="spacingAndGlyphs" style="clip-path:url(#pg);">$1,342.32</text>
<text x="515.00" y="403.80" font-size="2.9" fill="#15181c" font-weight="bold" textLength="159.00" lengthAdjust="spacingAndGlyphs" style="clip-path:url(#pg);">FOR COMMENTS OR CHANGE OF ADDRESS, ENTER INFORMATION ON REVERSE SIDE</text>
</svg>

<div class="a" style="left:354.8px;top:25.2px;width:34.4px;height:27.4px;border:2.2px solid #f6f000"></div>
<svg class="a" style="left:360px;top:30px" width="90" height="90" viewBox="360 30 90 90">
 <line x1="391" y1="55.6" x2="427.9" y2="92.3" stroke="#f39826" stroke-width="3.8"/>
 <path d="M378.9 44.2 L395.9 51.6 L386.3 60Z" fill="#f39826"/>
 <circle cx="427.9" cy="92.3" r="10.6" fill="#f39826"/>
 <text x="427.6" y="97.6" text-anchor="middle" font-family="Liberation Sans" font-weight="bold" font-size="14.5" fill="#ffffff">1</text>
</svg>
<!-- frame overlay -->
<div class="a" style="left:0;top:0;width:800px;height:1px;background:#656968"></div>
<div class="a" style="left:0;top:422px;width:800px;height:2px;background:#656968"></div>
<div class="a" style="left:0;top:0;width:1px;height:424px;background:#656968"></div>
<div class="a" style="left:799px;top:0;width:1px;height:424px;background:#656968"></div>

</body></html>
